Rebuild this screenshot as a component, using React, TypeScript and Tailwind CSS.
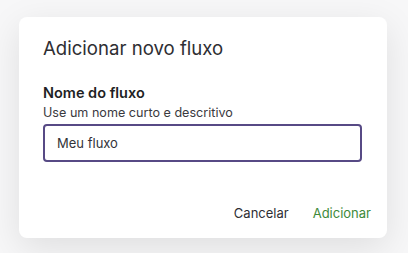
export default function App() {
  return (
    <div
      className="min-h-screen bg-[#f7f7f8] pt-[17px] pl-[19px]"
      style={{ fontFamily: 'Inter, "Noto Sans", sans-serif' }}
    >
      {/* Dialogo */}
      <div className="w-[368px] h-[221px] bg-white rounded-lg shadow-[0_10px_36px_rgba(0,0,0,0.10)] px-6 pt-[19px] flex flex-col">
        <h2 className="text-[18.6px] leading-[24px] text-[#2e2e33] font-normal">Adicionar novo fluxo</h2>

        <label className="mt-[23px] text-[14.5px] leading-[20px] font-semibold text-[#1f1f24]">Nome do fluxo</label>
        <p className="mt-[1px] text-[12.6px] leading-[17px] text-[#3a3a40]">Use um nome curto e descritivo</p>

        <input
          defaultValue="Meu fluxo"
          className="mt-[3px] w-[319px] h-[38px] rounded border-2 border-[#574a85] px-3 text-[13px] text-[#333338] outline-none"
        />

        <div className="mt-auto mb-[15px] flex justify-end gap-6 text-[13px]">
          <button className="text-[#2e2e33]">Cancelar</button>
          <button className="text-[#3d8a3a] -mr-2">Adicionar</button>
        </div>
      </div>
    </div>
  );
}
